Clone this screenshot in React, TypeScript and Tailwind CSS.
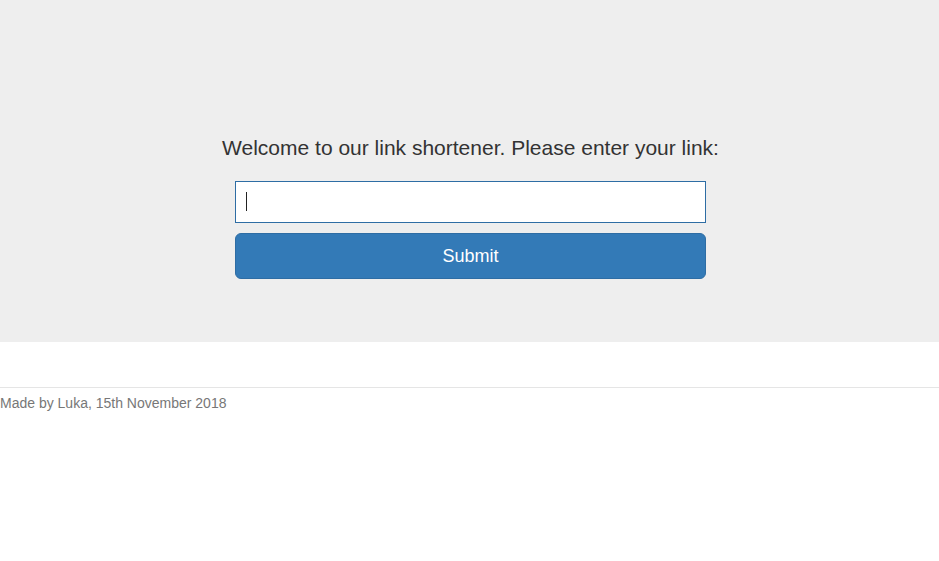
export default function App() {
  return (
    <div className="min-h-[561px] bg-white font-['Liberation_Sans',Arial,sans-serif] text-[#333]">
      {/* Jumbotron */}
      <section className="bg-[#eeeeee] pt-[133px] pb-[63px] pl-[2px]">
        <div className="mx-auto flex w-[471px] flex-col items-center">
          <p className="whitespace-nowrap text-[21px] leading-[30px]">
            Welcome to our link shortener. Please enter your link:
          </p>
          <form className="mt-[18px] flex w-full flex-col gap-[10px]" onSubmit={(e) => e.preventDefault()}>
            <div className="relative">
              <input
                type="text"
                className="block h-[42px] w-full border border-[#2e6da4] bg-white px-[10px] text-[18px] caret-transparent outline-none"
              />
              <span className="pointer-events-none absolute left-[11px] top-[11px] h-[19px] w-px bg-[#222]" />
            </div>
            <button
              type="submit"
              className="h-[46px] w-full rounded-[6px] border border-[#2e6da4] bg-[#337ab7] text-[18px] text-white"
            >
              Submit
            </button>
          </form>
        </div>
      </section>

      {/* Footer */}
      <footer className="mt-[45px] border-t border-[#e5e5e5] pt-[5px]">
        <p className="text-[14px] leading-[20px] text-[#777]">Made by Luka, 15th November 2018</p>
      </footer>
    </div>
  );
}
